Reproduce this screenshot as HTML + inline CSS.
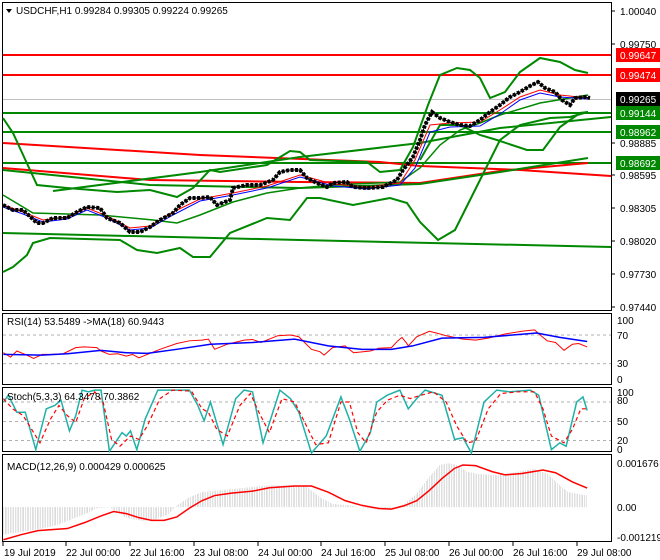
<!DOCTYPE html>
<html><head><meta charset="utf-8"><style>
html,body{margin:0;padding:0;background:#fff;width:660px;height:560px;overflow:hidden}
svg{display:block;font-family:"Liberation Sans",Tahoma,sans-serif;font-size:10px}
</style></head><body>
<svg width="660" height="560" viewBox="0 0 660 560" xmlns="http://www.w3.org/2000/svg">
<defs>
<pattern id="hb" x="0" y="0" width="4" height="600" patternUnits="userSpaceOnUse">
<rect x="0" y="0" width="1" height="600" fill="#b4b4b4"/></pattern>
</defs>
<rect x="2.5" y="2.5" width="609" height="308" fill="none" stroke="#000"/>
<rect x="2.5" y="313.5" width="609" height="71" fill="none" stroke="#000"/>
<rect x="2.5" y="387.5" width="609" height="64" fill="none" stroke="#000"/>
<rect x="2.5" y="454.5" width="609" height="87" fill="none" stroke="#000"/>

<line x1="3" y1="99.5" x2="611" y2="99.5" stroke="#c0c0c0"/>
<line x1="3" y1="55" x2="611" y2="55" stroke="#f00" stroke-width="2"/>
<line x1="3" y1="75" x2="611" y2="75" stroke="#f00" stroke-width="2"/>
<line x1="3" y1="113" x2="611" y2="113" stroke="#080" stroke-width="2"/>
<line x1="3" y1="132" x2="611" y2="132" stroke="#080" stroke-width="2"/>
<line x1="3" y1="163" x2="611" y2="163" stroke="#080" stroke-width="2"/>
<polyline points="3,143 200,155 380,162 420,166 520,170 611,176" fill="none" stroke="#f00" stroke-width="2"/>
<polyline points="3,168 150,180 300,182 420,183 500,171 588,163" fill="none" stroke="#f00" stroke-width="2"/>
<polyline points="3,233 300,240 611,247" fill="none" stroke="#080" stroke-width="2"/>
<polyline points="3,170 150,185 300,188 420,184 500,172 588,158" fill="none" stroke="#080" stroke-width="2"/>
<polyline points="53,191 200,172 300,157 420,143 500,128 611,117" fill="none" stroke="#080" stroke-width="2"/>
<!-- bollinger -->
<polyline points="3,118 13,133 30,170 37,185 67,188 117,192 150,190 177,197 193,188 210,170 220,172 267,165 290,151 300,152 310,160 367,162 380,172 400,170 413,147 428,105 440,75 457,68 470,70 480,78 490,98 505,92 520,72 540,58 560,62 575,70 588,73" fill="none" stroke="#080" stroke-width="2"/>
<polyline points="3,272 13,267 27,255 33,243 50,238 120,240 137,250 157,253 180,248 193,257 210,257 230,233 267,218 290,220 307,198 320,198 353,205 390,198 407,203 420,222 438,240 455,230 470,200 485,170 500,140 520,125 550,118 570,117 588,112" fill="none" stroke="#080" stroke-width="2"/>
<polyline points="3,195 33,213 100,215 153,220 177,223 200,215 233,202 267,193 300,188 333,185 400,182 420,168 440,145 460,130 480,123 500,115 540,103 588,95" fill="none" stroke="#080" stroke-width="1.5"/>
<polyline points="420,160 440,125 460,125 480,135 497,140 527,150 543,150 560,127 580,113 588,112" fill="none" stroke="#080" stroke-width="2"/>
<!-- MAs -->
<polyline points="3,205 23,212 43,220 67,217 87,208 107,216 130,228 150,226 173,212 200,199 233,193 267,186 300,175 333,184 367,187 400,183 415,160 430,125 450,123 480,122 500,110 520,97 540,90 560,95 588,98" fill="none" stroke="#f00" stroke-width="1"/>
<polyline points="3,207 23,214 43,222 67,219 87,210 107,218 130,230 150,228 173,215 200,201 233,195 267,188 300,177 333,186 367,189 400,185 415,168 430,132 450,127 480,126 500,114 520,100 540,93 560,97 588,99" fill="none" stroke="#00f" stroke-width="1"/>
<!-- price -->
<polyline points="3,205 13,210 23,210 37,223 43,223 53,218 67,218 77,212 87,207 100,208 107,218 120,223 130,232 140,232 150,227 160,220 173,213 180,205 190,198 200,198 210,197 217,205 230,200 233,188 247,185 260,185 273,180 280,172 290,170 300,170 307,178 317,183 327,187 333,183 347,182 353,187 367,188 383,187 397,180 403,170 413,157 420,140 425,125 432,112 440,118 450,122 460,125 470,126 480,120 490,112 500,105 510,97 520,92 530,86 538,82 545,88 555,92 562,100 570,105 575,98 585,97 590,98" fill="none" stroke="#000" stroke-width="4" stroke-dasharray="3,1.5"/>
<polyline points="3,205 13,210 23,210 37,223 43,223 53,218 67,218 77,212 87,207 100,208 107,218 120,223 130,232 140,232 150,227 160,220 173,213 180,205 190,198 200,198 210,197 217,205 230,200 233,188 247,185 260,185 273,180 280,172 290,170 300,170 307,178 317,183 327,187 333,183 347,182 353,187 367,188 383,187 397,180 403,170 413,157 420,140 425,125 432,112 440,118 450,122 460,125 470,126 480,120 490,112 500,105 510,97 520,92 530,86 538,82 545,88 555,92 562,100 570,105 575,98 585,97 590,98" fill="none" stroke="#000" stroke-width="1"/>

<g fill="#000">
<text x="620" y="15">1.00040</text>
<text x="620" y="48">0.99750</text>
<text x="620" y="147">0.98885</text>
<text x="620" y="179">0.98595</text>
<text x="620" y="212">0.98305</text>
<text x="620" y="245">0.98020</text>
<text x="620" y="278">0.97730</text>
<text x="620" y="311">0.97440</text>
</g>
<g stroke="#000"><line x1="612" y1="11" x2="615" y2="11"/><line x1="612" y1="44" x2="615" y2="44"/><line x1="612" y1="143" x2="615" y2="143"/><line x1="612" y1="175" x2="615" y2="175"/><line x1="612" y1="208" x2="615" y2="208"/><line x1="612" y1="241" x2="615" y2="241"/><line x1="612" y1="274" x2="615" y2="274"/><line x1="612" y1="307" x2="615" y2="307"/></g>
<rect x="616" y="48" width="44" height="14" fill="#f00"/><text x="620" y="59" fill="#fff">0.99647</text>
<rect x="616" y="68" width="44" height="14" fill="#f00"/><text x="620" y="79" fill="#fff">0.99474</text>
<rect x="616" y="92" width="44" height="14" fill="#000"/><text x="620" y="103" fill="#fff">0.99265</text>
<rect x="616" y="106" width="44" height="14" fill="#080"/><text x="620" y="117" fill="#fff">0.99144</text>
<rect x="616" y="125" width="44" height="14" fill="#080"/><text x="620" y="136" fill="#fff">0.98962</text>
<rect x="616" y="156" width="44" height="14" fill="#080"/><text x="620" y="167" fill="#fff">0.98692</text>

<path d="M6,9 L12,9 L9,13 Z" fill="#000"/>
<text x="16" y="14">USDCHF,H1  0.99284 0.99305 0.99224 0.99265</text>

<!-- RSI -->
<g stroke="#b0b0b0" stroke-dasharray="3,3"><line x1="3" y1="335" x2="611" y2="335"/><line x1="3" y1="363.6" x2="611" y2="363.6"/></g>
<g transform="translate(0,300) scale(0.4209,0.3401)">
<polyline vector-effect="non-scaling-stroke" points="8,155 25,168 40,150 60,160 80,172 100,160 120,160 150,158 180,140 200,138 230,140 240,150 260,160 280,158 300,165 315,160 330,170 350,160 380,145 420,128 450,120 480,118 495,115 510,145 540,130 580,118 600,116 620,125 660,105 690,103 710,108 740,145 760,152 770,162 790,140 820,135 840,155 880,150 900,142 930,140 945,120 955,110 965,125 970,135 990,108 1020,92 1040,98 1060,105 1100,115 1130,118 1160,112 1200,100 1240,92 1270,88 1290,110 1300,120 1320,125 1340,148 1360,130 1375,128 1395,138" fill="none" stroke="#f00" stroke-width="1"/>
<polyline vector-effect="non-scaling-stroke" points="8,160 100,162 160,158 240,148 300,155 350,157 420,145 500,130 600,125 700,115 780,135 860,145 930,145 980,135 1050,112 1150,110 1275,97 1330,110 1395,122" fill="none" stroke="#00f" stroke-width="1.5"/>
</g>
<text x="7" y="325">RSI(14) 53.5489  -&gt;MA(18) 60.9443</text>
<g fill="#000"><text x="617" y="324">100</text><text x="617" y="339">70</text><text x="617" y="367">30</text><text x="617" y="383">0</text></g>

<!-- Stoch -->
<g stroke="#b0b0b0" stroke-dasharray="3,3"><line x1="3" y1="402" x2="611" y2="402"/><line x1="3" y1="421.5" x2="611" y2="421.5"/><line x1="3" y1="440.5" x2="611" y2="440.5"/></g>
<g transform="translate(0,300) scale(0.4209,0.3401)">
<polyline vector-effect="non-scaling-stroke" points="8,300 20,280 40,330 60,330 85,440 110,320 130,310 145,295 165,385 180,340 195,265 210,270 225,265 240,265 260,445 290,390 300,400 310,385 325,440 345,350 375,265 400,265 450,265 470,310 485,355 500,300 530,425 560,290 580,265 600,270 625,420 665,265 690,290 710,330 740,450 775,400 810,285 830,350 855,445 880,390 895,300 920,280 950,265 970,320 990,290 1010,265 1050,280 1080,410 1100,405 1120,450 1150,300 1180,265 1210,270 1260,265 1280,280 1310,440 1330,420 1345,430 1370,300 1385,285 1395,325" fill="none" stroke="#20b0a8" stroke-width="1.5"/>
<polyline vector-effect="non-scaling-stroke" points="8,290 30,320 55,340 75,380 95,420 120,350 140,310 160,340 180,360 200,290 225,270 245,300 265,410 285,430 310,400 330,410 350,370 380,290 410,265 455,268 480,320 495,330 515,380 540,400 570,310 595,275 615,330 640,390 670,290 700,300 720,350 750,425 780,420 810,300 830,300 850,390 870,420 895,330 920,295 950,280 975,290 1000,280 1030,270 1060,300 1085,370 1110,420 1130,415 1160,320 1190,275 1230,270 1270,270 1290,320 1310,400 1340,420 1360,380 1380,320 1395,320" fill="none" stroke="#f00" stroke-width="1.2" stroke-dasharray="4,3"/>
</g>
<text x="7" y="400">Stoch(5,3,3) 64.3478 70.3862</text>
<g fill="#000"><text x="617" y="396">100</text><text x="617" y="404">80</text><text x="617" y="425">50</text><text x="617" y="444">20</text><text x="617" y="453">0</text></g>

<!-- MACD -->
<g transform="translate(0,300) scale(0.4209,0.3401)">
<polygon points="8,609 8,690 60,680 100,672 140,660 180,640 210,625 230,612 260,609 300,640 340,650 370,645 400,630 420,605 450,580 480,565 520,560 560,555 600,550 640,545 700,545 730,550 760,580 790,600 830,604 870,612 900,616 930,614 960,600 990,570 1020,520 1045,485 1065,480 1085,485 1110,505 1140,512 1180,515 1230,505 1270,497 1300,510 1330,545 1350,565 1395,575 1395,609" fill="url(#hb)"/>
<polyline vector-effect="non-scaling-stroke" points="8,705 50,690 90,678 160,672 200,655 240,635 270,622 300,628 330,640 360,648 390,648 420,638 450,612 480,590 510,575 550,568 600,562 640,552 700,547 740,547 780,565 820,590 860,604 900,613 930,615 960,605 990,590 1020,560 1050,525 1080,495 1100,485 1130,487 1170,505 1200,514 1240,510 1290,500 1320,508 1360,535 1395,553" fill="none" stroke="#f00" stroke-width="1.5"/>
</g>
<text x="7" y="470">MACD(12,26,9) 0.000429 0.000625</text>
<g fill="#000"><text x="617" y="467">0.001676</text><text x="617" y="511">0.00</text><text x="617" y="541">-0.001219</text></g>

<g stroke="#000"><line x1="3" y1="542" x2="3" y2="546"/><line x1="66" y1="542" x2="66" y2="546"/><line x1="130" y1="542" x2="130" y2="546"/><line x1="194" y1="542" x2="194" y2="546"/><line x1="258" y1="542" x2="258" y2="546"/><line x1="321" y1="542" x2="321" y2="546"/><line x1="385" y1="542" x2="385" y2="546"/><line x1="449" y1="542" x2="449" y2="546"/><line x1="513" y1="542" x2="513" y2="546"/><line x1="577" y1="542" x2="577" y2="546"/></g>
<g fill="#000">
<text x="4" y="556">19 Jul 2019</text>
<text x="66" y="556">22 Jul 00:00</text>
<text x="130" y="556">22 Jul 16:00</text>
<text x="194" y="556">23 Jul 08:00</text>
<text x="258" y="556">24 Jul 00:00</text>
<text x="321" y="556">24 Jul 16:00</text>
<text x="385" y="556">25 Jul 08:00</text>
<text x="449" y="556">26 Jul 00:00</text>
<text x="513" y="556">26 Jul 16:00</text>
<text x="577" y="556">29 Jul 08:00</text>
</g>
</svg>
</body></html>
